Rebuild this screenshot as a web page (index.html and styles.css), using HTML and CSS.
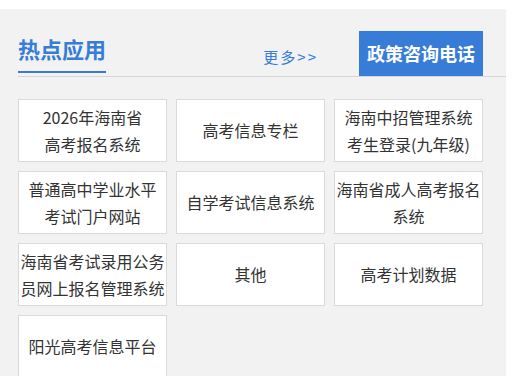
FILE: index.html
```html
<!DOCTYPE html>
<html lang="zh-CN">
<head>
    <meta charset="UTF-8" />
    <meta name="viewport" content="width=device-width, initial-scale=1.0"/>
    <title>热点应用</title>
    <link rel="stylesheet" href="styles.css">
</head>
<body>
    <!-- ===== 热点应用 ===== -->
    <div class="hot-apps">
        <div class="hot-head">
            <h2 class="hot-title">热点应用</h2>
            <a class="more-link" href="#">更多&gt;&gt;</a>
            <div class="policy-tab">政策咨询电话</div>
        </div>
        <div class="app-grid">
            <a class="app-item" href="#">2026年海南省<br>高考报名系统</a>
            <a class="app-item" href="#">高考信息专栏</a>
            <a class="app-item" href="#">海南中招管理系统<br>考生登录(九年级)</a>
            <a class="app-item" href="#">普通高中学业水平<br>考试门户网站</a>
            <a class="app-item" href="#">自学考试信息系统</a>
            <a class="app-item" href="#">海南省成人高考报名<br>系统</a>
            <a class="app-item" href="#">海南省考试录用公务<br>员网上报名管理系统</a>
            <a class="app-item" href="#">其他</a>
            <a class="app-item" href="#">高考计划数据</a>
            <a class="app-item" href="#">阳光高考信息平台</a>
        </div>
    </div>
</body>
</html>
```

FILE: styles.css
```css
body{
    margin:0;background:#fff;
    font-family:"Noto Sans CJK SC","Microsoft YaHei",sans-serif;
}
a{text-decoration:none;}

.hot-apps{
    width:506px;margin-top:9px;
    padding:22px 0 20px 18px;box-sizing:border-box;
    background:#f2f2f2;
}

/* 标题栏 */
.hot-head{
    display:flex;align-items:flex-end;
    padding-right:23px;border-bottom:1px solid #d6d6d6;
}
.hot-title{
    margin:0 0 3px;padding-bottom:8px;
    font-size:22px;line-height:30px;font-weight:bold;color:#377dd8;
    border-bottom:2px solid #377dd8;
}
.more-link{
    margin:0 41px 9px auto;
    font-size:15px;line-height:20px;color:#377dd8;letter-spacing:2px;
}
.policy-tab{
    height:45px;line-height:45px;padding:0 8px;
    font-size:18px;font-weight:bold;color:#fff;background:#377dd8;
}

/* 应用格子 */
.app-grid{
    display:grid;grid-template-columns:repeat(3,149px);
    gap:9px;margin-top:22px;
}
.app-item{
    display:flex;align-items:center;justify-content:center;
    height:63px;box-sizing:border-box;
    background:#fff;border:1px solid #dadada;
    font-size:16px;line-height:27px;color:#333;text-align:center;
}
```
